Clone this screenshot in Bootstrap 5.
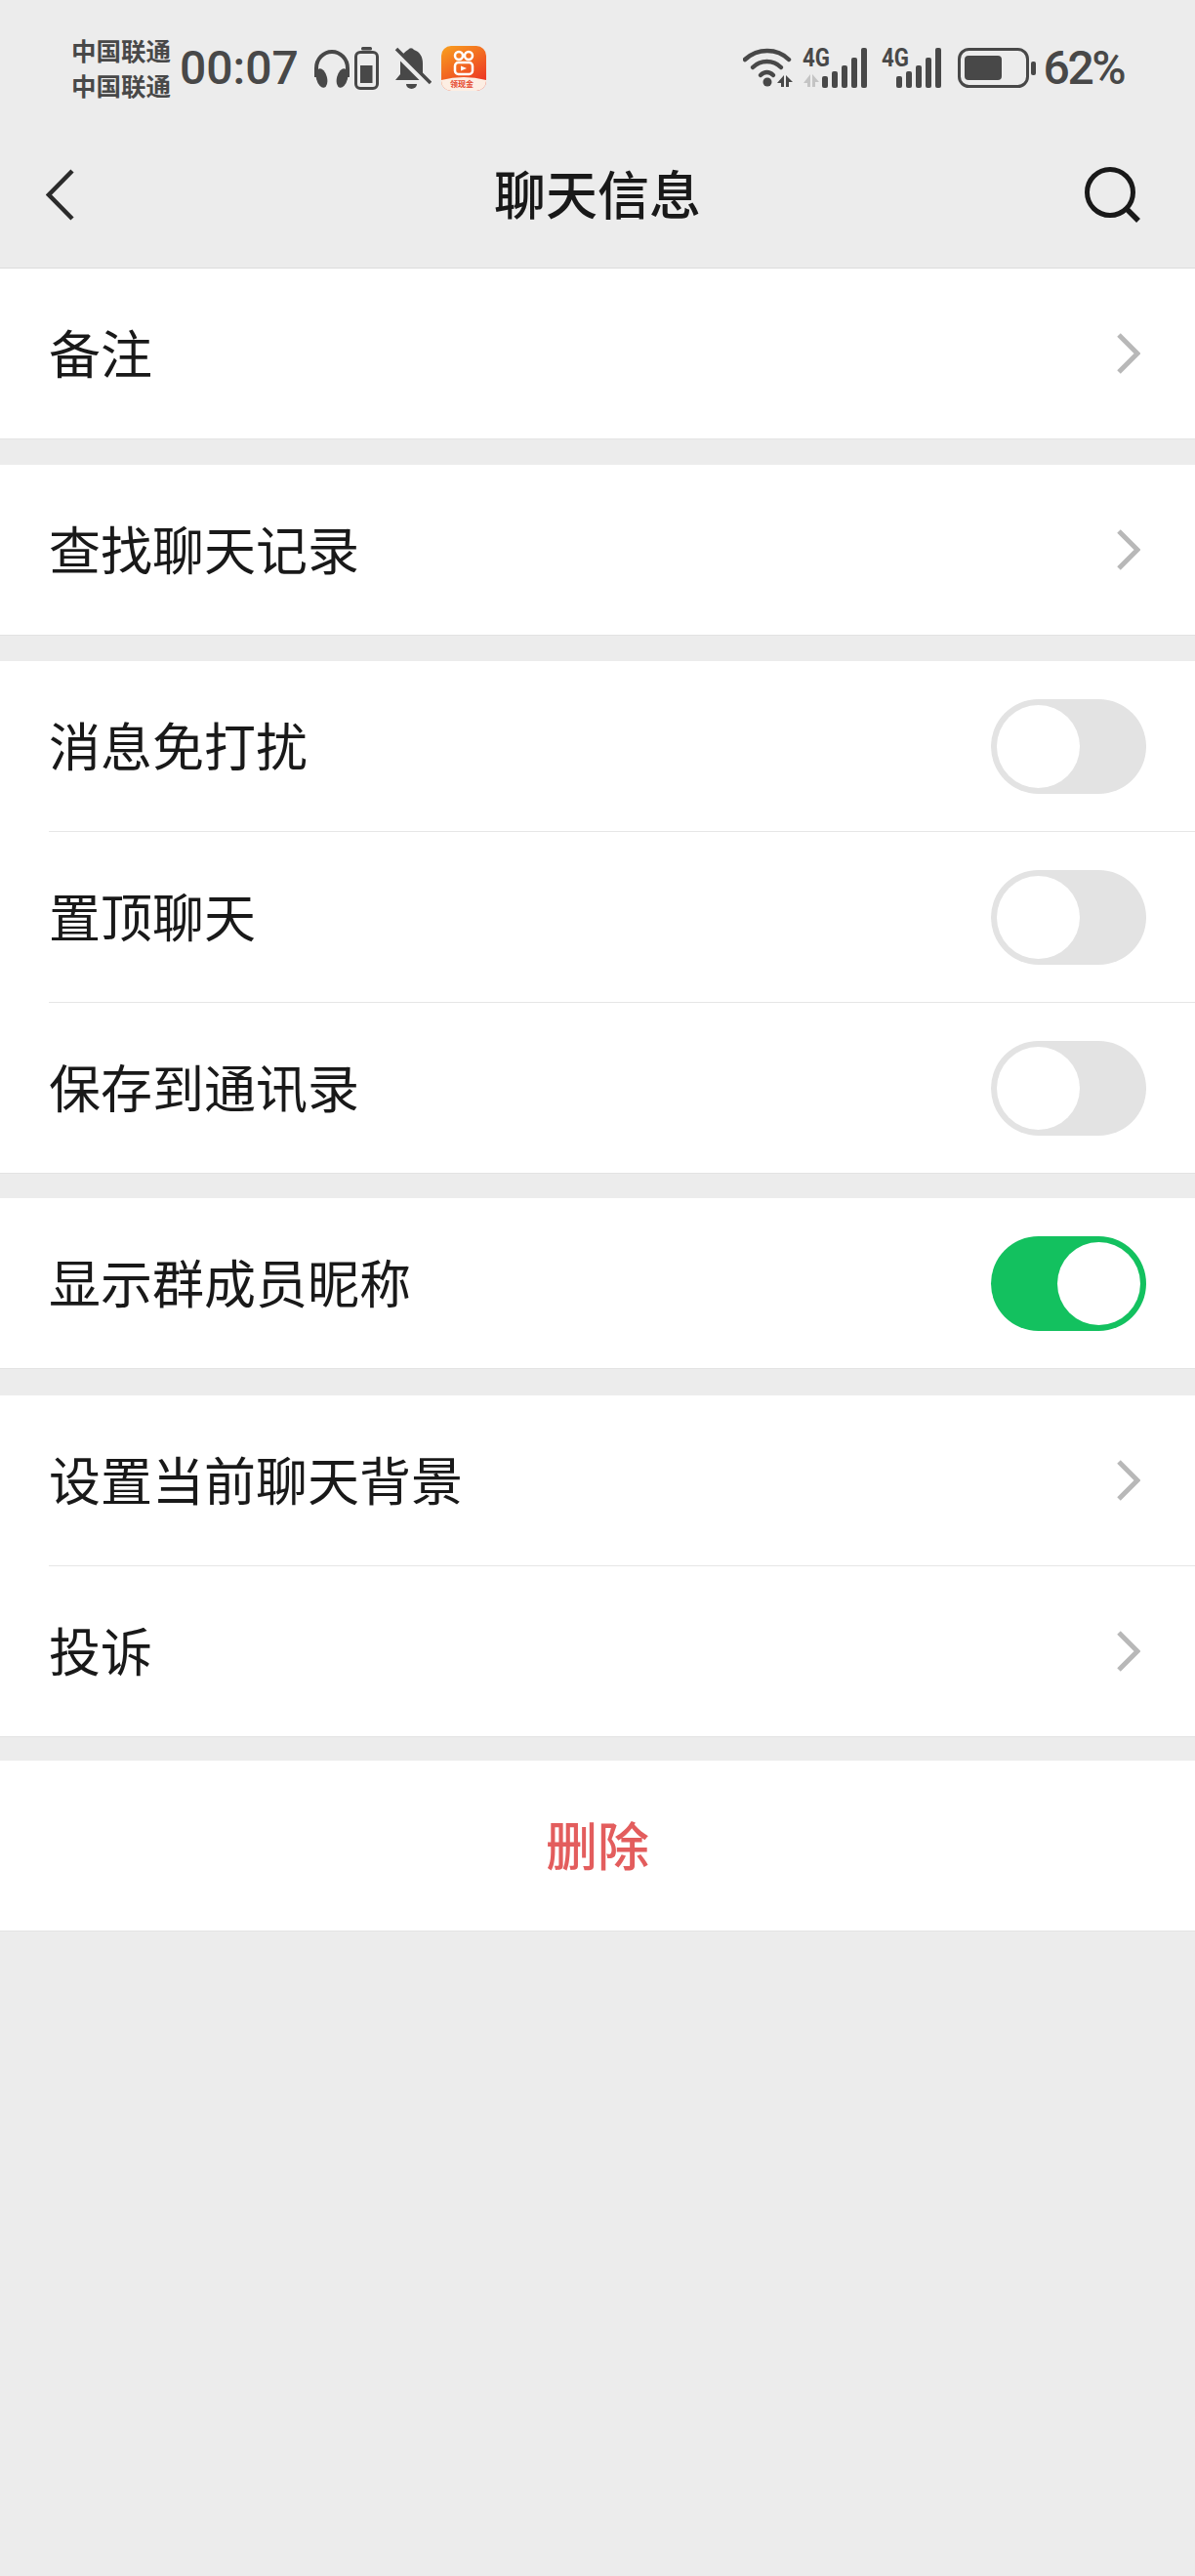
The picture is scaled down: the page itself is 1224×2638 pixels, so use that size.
<!DOCTYPE html>
<html lang="zh">

<head>
  <meta charset="utf-8">
  <title>聊天信息</title>
  <link href="https://cdn.jsdelivr.net/npm/bootstrap@5.3.2/dist/css/bootstrap.min.css" rel="stylesheet" type="text/css" />
  <script src="https://cdn.jsdelivr.net/npm/bootstrap@5.3.2/dist/js/bootstrap.bundle.min.js"></script>

  <style>
    body {
      background-color: #ececec;
      min-height: 2638px;
      color: #191919;
      font-family: "Noto Sans CJK SC", "Liberation Sans", sans-serif;
    }

    /* status bar */
    .status-bar {
      height: 140px;
      padding: 0 73px;
      color: #484848;
    }

    .carrier {
      font-size: 25.5px;
      font-weight: 700;
      line-height: 36px;
      margin-top: -2px;
      margin-right: 9px;
    }

    .clock,
    .percent {
      font-family: Roboto, "Liberation Sans", sans-serif;
      font-weight: 500;
      line-height: 1;
    }

    .clock {
      font-size: 48px;
      margin-right: 15px;
    }

    .percent {
      font-size: 48px;
      letter-spacing: -2.5px;
      margin-left: 7px;
    }

    .status-bar svg {
      display: block;
      flex-shrink: 0;
    }

    .net-icon {
      margin-top: -8px;
    }

    .net-label {
      font-family: Roboto, "Liberation Sans", sans-serif;
      font-weight: 700;
      font-size: 25px;
    }

    .app-icon {
      margin-left: 2px;
    }

    /* title bar */
    .title-bar {
      height: 135px;
      padding: 0 56px 16px 47px;
      border-bottom: 1px solid #dcdcdc;
    }

    .title-left {
      width: 112px;
    }

    .title-right {
      width: 103px;
    }

    .title-text {
      font-size: 53px;
      font-weight: 500;
      line-height: 1;
      margin-bottom: 3px;
    }

    /* settings rows */
    .setting-group {
      background-color: #fff;
      margin-bottom: 26px;
      border-bottom: 1px solid #e3e3e3;
    }

    .gap-25 {
      margin-bottom: 25px;
    }

    .gap-27 {
      margin-bottom: 27px;
    }

    .gap-24 {
      margin-bottom: 24px;
    }

    .setting-row {
      height: 174px;
      padding: 0 50px;
      font-size: 53px;
      line-height: 1;
    }

    .setting-row > span {
      margin-bottom: 3px;
    }

    .row-divider {
      height: 1px;
      margin-left: 50px;
      background-color: #e6e6e6;
    }

    .row-arrow {
      margin-right: 6px;
    }

    .toggle-track {
      width: 159px;
      height: 97px;
      padding: 6px;
      background-color: #e3e3e3;
    }

    .toggle-track.is-on {
      background-color: #13c15f;
    }

    .toggle-knob {
      width: 85px;
      height: 85px;
    }

    .danger-text {
      color: #e35d5d;
      font-weight: 500;
    }
  </style>
</head>

<body>
  <header>
    <div class="status-bar d-flex align-items-center justify-content-between">
      <div class="d-flex align-items-center">
        <div class="carrier">
          <div>中国联通</div>
          <div>中国联通</div>
        </div>
        <div class="clock">00:07</div>
        <svg width="38" height="41" viewBox="0 0 38 41" class="me-1">
          <path d="M3 29V20a16 17 0 0 1 32 0v9" fill="none" stroke="#484848" stroke-width="4" />
          <ellipse cx="8.500" cy="30" rx="5.500" ry="10" transform="rotate(-14 8.500 30)" fill="#484848" />
          <ellipse cx="29.500" cy="30" rx="5.500" ry="10" transform="rotate(14 29.500 30)" fill="#484848" />
        </svg>
        <svg width="25" height="44" viewBox="0 0 25 44" class="me-3">
          <rect x="7" y="0" width="11" height="3.500" rx="1.500" fill="#484848" />
          <rect x="1.500" y="5.500" width="22" height="37" rx="4.500" fill="none" stroke="#484848" stroke-width="3" />
          <rect x="6" y="19" width="12.500" height="18" fill="#484848" />
        </svg>
        <svg width="38" height="44" viewBox="0 0 38 44" class="me-2">
          <path d="M1 34 6 28V16C6 8 11 5 14 3a3.500 3.500 0 0 1 6 0C26 5 29 10 29 17V28L34 34Z" fill="#484848" />
          <path d="M12 38a5.500 5 0 0 0 11 0Z" fill="#484848" />
          <path d="M0 5 33 38" stroke="#ececec" stroke-width="5" />
          <path d="M2 2 37 37" stroke="#484848" stroke-width="3.500" />
        </svg>
        <svg width="46" height="46" viewBox="0 0 46 46" class="app-icon">
          <defs>
            <linearGradient id="appFill" x1="0" y1="0" x2="0.600" y2="1">
              <stop offset="0" stop-color="#f9a11f" />
              <stop offset="1" stop-color="#ec3524" />
            </linearGradient>
          </defs>
          <rect width="46" height="46" rx="10" fill="url(#appFill)" />
          <path d="M0 35q23-6 46 0v1a10 10 0 0 1-10 10H10A10 10 0 0 1 0 36Z" fill="#fdeee3" />
          <circle cx="18" cy="10" r="4" fill="none" stroke="#fff" stroke-width="2.500" />
          <circle cx="28" cy="10" r="4" fill="none" stroke="#fff" stroke-width="2.500" />
          <rect x="14" y="17" width="18" height="12" rx="3.500" fill="none" stroke="#fff" stroke-width="2.500" />
          <path d="M20 20.500 26 23 20 25.500Z" fill="#fff" />
          <text x="21" y="42" text-anchor="middle" font-size="8" font-weight="700" fill="#e5482d" font-family="Noto Sans CJK SC">领现金</text>
        </svg>
      </div>

      <div class="d-flex align-items-center">
        <svg width="53" height="42" viewBox="0 0 53 42" class="me-2">
          <path d="M2 12C15 0 35 0 47 12" fill="none" stroke="#484848" stroke-width="4.500" stroke-linecap="round" />
          <path d="M10 20C18 12 31 12 39 20" fill="none" stroke="#484848" stroke-width="4.500" stroke-linecap="round" />
          <path d="M18 28C22 24 27 24 31 28" fill="none" stroke="#484848" stroke-width="4.500" stroke-linecap="round" />
          <circle cx="25" cy="35" r="4.500" fill="#484848" />
          <path d="M42 28V40H39V36H35ZM44 28 51 35H47V40H44Z" fill="#484848" />
        </svg>
        <svg width="69" height="50" viewBox="0 -8 69 50" class="net-icon me-2">
          <text x="0" y="19" class="net-label" fill="#484848" textLength="28" lengthAdjust="spacingAndGlyphs">4G</text>
          <path d="M8 27V40H5V36H1ZM10 27 17 35H13V40H10Z" fill="#c4c4c4" />
          <rect x="20" y="29" width="6" height="12" rx="2" fill="#484848" />
          <rect x="30" y="24" width="6" height="17" rx="2" fill="#484848" />
          <rect x="40" y="18" width="6" height="23" rx="2" fill="#484848" />
          <rect x="50" y="10" width="6" height="31" rx="2" fill="#484848" />
          <rect x="60" y="0" width="6" height="41" rx="2" fill="#484848" />
        </svg>
        <svg width="62" height="50" viewBox="0 -8 62 50" class="net-icon ms-1 me-3">
          <text x="0" y="19" class="net-label" fill="#484848" textLength="28" lengthAdjust="spacingAndGlyphs">4G</text>
          <rect x="15" y="29" width="6" height="12" rx="2" fill="#484848" />
          <rect x="25" y="24" width="6" height="17" rx="2" fill="#484848" />
          <rect x="35" y="18" width="6" height="23" rx="2" fill="#484848" />
          <rect x="45" y="10" width="6" height="31" rx="2" fill="#484848" />
          <rect x="55" y="0" width="6" height="41" rx="2" fill="#484848" />
        </svg>
        <svg width="81" height="42" viewBox="0 0 81 42">
          <rect x="1.500" y="1.500" width="70" height="38" rx="10" fill="none" stroke="#484848" stroke-width="3" />
          <rect x="7" y="8" width="38" height="25" rx="4" fill="#484848" />
          <rect x="75" y="14" width="5" height="14" rx="2" fill="#484848" />
        </svg>
        <div class="percent">62%</div>
      </div>
    </div>

    <div class="title-bar d-flex align-items-center">
      <div class="title-left">
        <svg class="d-block" width="29" height="53" viewBox="0 0 29 53">
          <path d="M27 2 3 26.500 27 51" fill="none" stroke="#2b2b2b" stroke-width="4.500" />
        </svg>
      </div>
      <div class="title-text flex-grow-1 text-center">聊天信息</div>
      <div class="title-right d-flex justify-content-end">
        <svg class="d-block" width="57" height="57" viewBox="0 0 57 57">
          <circle cx="26" cy="26" r="23.500" fill="none" stroke="#191919" stroke-width="5" />
          <path d="M42 42 55 55" stroke="#191919" stroke-width="5.500" />
        </svg>
      </div>
    </div>
  </header>

  <main>
    <section class="setting-group">
      <div class="setting-row d-flex align-items-center justify-content-between">
        <span>备注</span>
        <svg class="row-arrow" width="24" height="42" viewBox="0 0 24 42"><path d="M2 2 21 21 2 40" fill="none" stroke="#b8b8b8" stroke-width="5" /></svg>
      </div>
    </section>

    <section class="setting-group">
      <div class="setting-row d-flex align-items-center justify-content-between">
        <span>查找聊天记录</span>
        <svg class="row-arrow" width="24" height="42" viewBox="0 0 24 42"><path d="M2 2 21 21 2 40" fill="none" stroke="#b8b8b8" stroke-width="5" /></svg>
      </div>
    </section>

    <section class="setting-group gap-25">
      <div class="setting-row d-flex align-items-center justify-content-between">
        <span>消息免打扰</span>
        <div class="toggle-track d-flex rounded-pill"><div class="toggle-knob bg-white rounded-circle"></div></div>
      </div>
      <div class="row-divider"></div>
      <div class="setting-row d-flex align-items-center justify-content-between">
        <span>置顶聊天</span>
        <div class="toggle-track d-flex rounded-pill"><div class="toggle-knob bg-white rounded-circle"></div></div>
      </div>
      <div class="row-divider"></div>
      <div class="setting-row d-flex align-items-center justify-content-between">
        <span>保存到通讯录</span>
        <div class="toggle-track d-flex rounded-pill"><div class="toggle-knob bg-white rounded-circle"></div></div>
      </div>
    </section>

    <section class="setting-group gap-27">
      <div class="setting-row d-flex align-items-center justify-content-between">
        <span>显示群成员昵称</span>
        <div class="toggle-track is-on d-flex justify-content-end rounded-pill"><div class="toggle-knob bg-white rounded-circle"></div></div>
      </div>
    </section>

    <section class="setting-group gap-24">
      <div class="setting-row d-flex align-items-center justify-content-between">
        <span>设置当前聊天背景</span>
        <svg class="row-arrow" width="24" height="42" viewBox="0 0 24 42"><path d="M2 2 21 21 2 40" fill="none" stroke="#b8b8b8" stroke-width="5" /></svg>
      </div>
      <div class="row-divider"></div>
      <div class="setting-row d-flex align-items-center justify-content-between">
        <span>投诉</span>
        <svg class="row-arrow" width="24" height="42" viewBox="0 0 24 42"><path d="M2 2 21 21 2 40" fill="none" stroke="#b8b8b8" stroke-width="5" /></svg>
      </div>
    </section>

    <section class="setting-group">
      <div class="setting-row d-flex align-items-center justify-content-center">
        <span class="danger-text">删除</span>
      </div>
    </section>
  </main>
</body>

</html>
